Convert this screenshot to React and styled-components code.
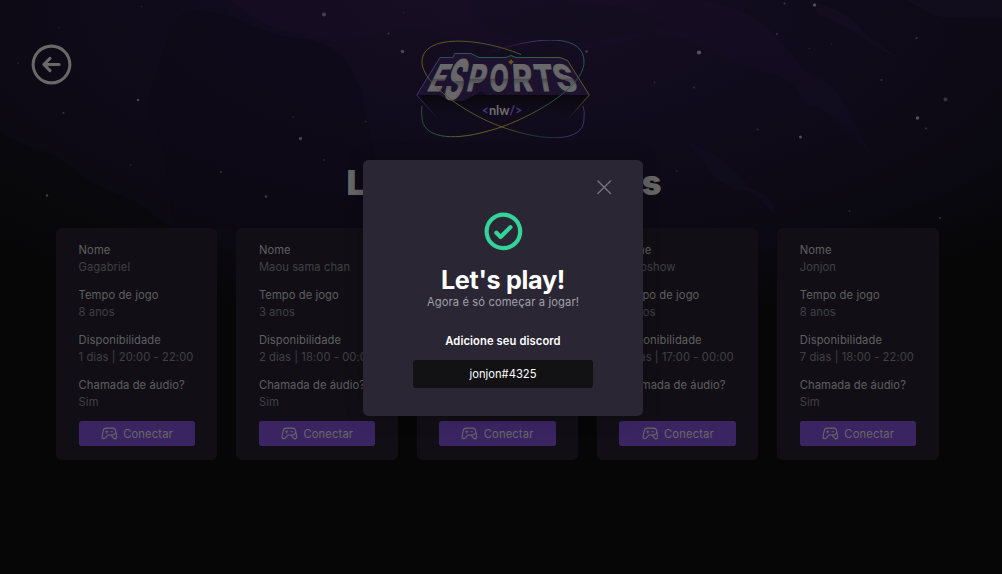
import React from "react";
import styled, { createGlobalStyle } from "styled-components";
import { PiArrowCircleLeft, PiCheckCircleBold, PiGameController, PiX } from "react-icons/pi";

const GlobalStyle = createGlobalStyle`
  *, *::before, *::after { box-sizing: border-box; margin: 0; padding: 0; }
  html, body { background: #121214; overflow: hidden; }
  body, button { font-family: Inter, "Liberation Sans", sans-serif; }
  svg { display: block; }
`;

const Page = styled.div`
  position: relative;
  height: 574px;
  overflow: hidden;
  background: #060607;
  isolation: isolate;
`;
const Backdrop = styled.svg`
  position: absolute;
  inset: 0;
  z-index: -1;
`;
const Header = styled.header`
  display: grid;
  grid-template-columns: 300px 1fr 300px;
  padding: 40px 0 0 27px;
  margin-right: 23px;
`;
const BackButton = styled.button`
  width: 49px;
  height: 49px;
  border: 0;
  background: none;
  color: #6a6968;
  font-size: 49px;
`;
const Logo = styled.svg`
  justify-self: center;
`;
const Heading = styled.h1`
  margin-top: 19.6px;
  height: 50px;
  padding-left: 6px;
  text-align: center;
  font-size: 33.6px;
  line-height: 50px;
  font-weight: 900;
  letter-spacing: -0.1px;
  color: #666;
  white-space: nowrap;
`;
const Cards = styled.main`
  display: flex;
  gap: 19px;
  padding: 20px 0 0 56.2px;
`;
const Card = styled.article`
  flex: none;
  display: flex;
  flex-direction: column;
  justify-content: flex-end;
  width: 161.3px;
  height: 232.4px;
  padding: 14px 22.4px;
  border-radius: 5.6px;
  background: #110f15;
`;
const Field = styled.div`
  margin-bottom: 11.2px;
  font-size: 11.2px;
  line-height: 16.8px;
  letter-spacing: 0.08px;
  white-space: nowrap;
`;
const Label = styled.p`
  color: #5f5f60;
`;
const Value = styled.p`
  color: #404044;
`;
const ConnectButton = styled.button`
  display: flex;
  align-items: center;
  justify-content: center;
  gap: 5.6px;
  width: 100%;
  height: 25.2px;
  margin-top: -0.7px;
  padding-top: 1px;
  border: 0;
  border-radius: 2.8px;
  background: #3a2562;
  color: #6a6769;
  font-size: 11.2px;
  letter-spacing: 0.15px;
  svg { font-size: 16.8px; }
`;
const Modal = styled.section`
  position: absolute;
  left: 363px;
  top: 159.6px;
  width: 280px;
  height: 256.4px;
  padding: 16px 27.2px;
  display: flex;
  flex-direction: column;
  align-items: center;
  border-radius: 5.6px;
  background: #2a2634;
  box-shadow: 0 0 17px rgba(0, 0, 0, 0.25);
`;
const CloseButton = styled.button`
  align-self: flex-end;
  height: 22.4px;
  border: 0;
  background: none;
  color: #76727e;
  font-size: 22.4px;
`;
const SuccessIcon = styled.div`
  margin-top: 11px;
  color: #34d399;
  font-size: 44.8px;
`;
const ModalTitle = styled.h2`
  margin-top: 7.8px;
  font-size: 25.2px;
  line-height: 36px;
  font-weight: 700;
  letter-spacing: -0.3px;
  color: #fff;
`;
const ModalText = styled.p`
  margin-top: -3.8px;
  font-size: 11.2px;
  line-height: 16.8px;
  letter-spacing: 0.1px;
  color: #a1a1aa;
`;
const DiscordLabel = styled.p`
  margin-top: 22.8px;
  font-size: 11.2px;
  line-height: 16.8px;
  font-weight: 600;
  letter-spacing: 0.1px;
  color: #fff;
`;
const DiscordTag = styled.div`
  margin-top: 10px;
  width: 179.2px;
  height: 28px;
  border-radius: 2.8px;
  background: #121214;
  color: #fff;
  text-align: center;
  font-size: 11.2px;
  line-height: 28px;
`;

const players = [
  { name: "Gagabriel", years: "8 anos", when: "1 dias | 20:00 - 22:00", audio: "Sim" },
  { name: "Maou sama chan", years: "3 anos", when: "2 dias | 18:00 - 00:00", audio: "Sim" },
  null,
  { name: "Roboshow", years: "5 anos", when: "5 dias | 17:00 - 00:00", audio: "Sim" },
  { name: "Jonjon", years: "8 anos", when: "7 dias | 18:00 - 22:00", audio: "Sim" },
];

const stars = [
  [324, 14.5, 2, 0.5], [300.5, 138.5, 1.7, 0.55], [138, 100, 1.2, 0.6], [63.5, 113, 1, 0.4],
  [47, 195.5, 1.2, 0.5], [266, 196.5, 1.4, 0.4], [221, 172, 1, 0.4], [130.5, 165, 1, 0.2],
  [18, 63, 1, 0.2], [141.5, 6.5, 0.8, 0.25], [59, 27.5, 0.8, 0.2], [293, 117, 0.9, 0.2],
  [324, 160, 1, 0.25], [402.5, 51.5, 1.7, 0.6], [388.5, 33.5, 1, 0.4], [403.5, 12.5, 0.8, 0.25],
  [586.5, 51.5, 1.3, 0.5], [365.5, 121.5, 1, 0.3], [654.5, 82.5, 0.9, 0.3], [699, 52.5, 2.1, 0.7],
  [814.5, 5, 1.6, 0.7], [784.5, 3.5, 1, 0.45], [777, 34, 1, 0.4], [809.5, 48.5, 0.8, 0.25],
  [831.5, 44, 0.8, 0.2], [916.5, 38, 1.1, 0.4], [881.5, 80, 1.1, 0.4], [945.5, 99.5, 2, 0.4],
  [917.5, 118, 1.8, 0.65], [926, 128.5, 1, 0.4], [800.5, 137, 1.5, 0.65], [757.5, 129.5, 1, 0.35],
  [694, 87.5, 1, 0.3], [676.5, 171, 1, 0.25], [849.5, 211, 1, 0.3], [940, 218, 1.1, 0.4],
];

const letters = [
  { c: "E", x: 10, y: 50.5, w: 15, h: 27, skew: -26 },
  { c: "S", x: 26, y: 58.5, w: 18, h: 40, skew: -17 },
  { c: "P", x: 49.5, y: 50.5, w: 18, h: 27, skew: -13 },
  { c: "O", x: 73, y: 50.5, w: 19, h: 27, skew: -3 },
  { c: "R", x: 97, y: 50.5, w: 20, h: 27, skew: 3 },
  { c: "T", x: 121, y: 50.5, w: 19, h: 27, skew: 10 },
  { c: "S", x: 143.5, y: 50.5, w: 20, h: 27, skew: 21 },
];

function Nebula() {
  return (
    <Backdrop width="1002" height="574" viewBox="0 0 1002 574">
      <defs>
        <radialGradient id="glow" gradientUnits="userSpaceOnUse" cx="0" cy="0" r="1" gradientTransform="translate(500 0) scale(740 330)">
          <stop offset="0" stopColor="#150e22" />
          <stop offset=".45" stopColor="#100b1b" />
          <stop offset=".8" stopColor="#0b0912" />
          <stop offset="1" stopColor="#060607" />
        </radialGradient>
        <linearGradient id="plume" x1="0" y1="0" x2="0" y2="1">
          <stop offset="0" stopColor="#190d27" />
          <stop offset="1" stopColor="#110c20" />
        </linearGradient>
      </defs>
      <rect width="1002" height="574" fill="#060606" />
      <rect width="1002" height="330" fill="url(#glow)" />
      <path d="M168 35C174 14 188 9 206 12C242 12 258 38 302 38C334 42 350 60 360 90L390 228H175C166 200 169 158 157 133C145 113 144 98 157 75Z" fill="#0c0a13" opacity=".35" />
      <path d="M230 0H470C472 22 490 34 530 42C590 60 640 38 668 24C640 8 610 0 500 0H700C750 8 778 32 796 62C812 82 832 78 842 100L870 152C836 122 828 108 812 106C794 102 806 78 764 72C725 64 704 36 650 32C570 44 500 60 450 38C420 20 390 30 334 42C300 30 270 35 230 0Z" fill="url(#plume)" opacity=".5" />
      <path d="M808 0C830 6 850 14 864 32L898 58C870 48 846 22 820 16Z M906 0H1002V18H950C925 16 920 6 906 0Z" fill="#161022" opacity=".5" />
      <path d="M684 140C714 150 736 170 750 188C768 194 776 202 774 214L790 228C768 214 762 192 740 190C710 184 704 158 684 140Z" fill="#110e1f" opacity=".6" />
      <path d="M0 131C22 150 45 146 70 166C96 192 122 190 150 212L170 228H0Z" fill="#070708" opacity=".5" />
      {stars.map(([x, y, r, o], i) => (
        <circle key={i} cx={x} cy={y} r={r} fill="#77707e" opacity={o} />
      ))}
    </Backdrop>
  );
}

function EsportsLogo() {
  return (
    <Logo width="174" height="98" viewBox="0 0 174 98" fill="none">
      <defs>
        <linearGradient id="orbitA" gradientUnits="userSpaceOnUse" x1="5" y1="15" x2="168" y2="90">
          <stop offset="0" stopColor="#62591f" />
          <stop offset=".33" stopColor="#4d5628" />
          <stop offset=".55" stopColor="#5c5427" />
          <stop offset=".8" stopColor="#173634" />
          <stop offset="1" stopColor="#463074" />
        </linearGradient>
        <linearGradient id="orbitB" gradientUnits="userSpaceOnUse" x1="168" y1="10" x2="5" y2="90">
          <stop offset="0" stopColor="#28505a" />
          <stop offset=".3" stopColor="#28543d" />
          <stop offset=".5" stopColor="#62591f" />
          <stop offset=".8" stopColor="#5a6428" />
          <stop offset="1" stopColor="#1b4e43" />
        </linearGradient>
        <linearGradient id="orbitC" gradientUnits="userSpaceOnUse" x1="68" y1="0" x2="168" y2="0">
          <stop offset="0" stopColor="#33235b" stopOpacity="0" />
          <stop offset=".5" stopColor="#402c70" />
          <stop offset="1" stopColor="#28586a" />
        </linearGradient>
        <linearGradient id="frame" gradientUnits="userSpaceOnUse" x1="0" y1="60" x2="174" y2="60">
          <stop offset="0" stopColor="#432b76" />
          <stop offset=".22" stopColor="#2a5362" />
          <stop offset=".55" stopColor="#21614c" />
          <stop offset="1" stopColor="#665b20" />
        </linearGradient>
        <linearGradient id="base" x1="0" y1="0" x2="0" y2="1">
          <stop offset="0" stopColor="#09070d" />
          <stop offset="1" stopColor="#0f0b19" stopOpacity="0" />
        </linearGradient>
        <linearGradient id="edge" x1="0" y1="0" x2="0" y2="1">
          <stop offset="0" stopColor="#432b76" />
          <stop offset="1" stopColor="#432b76" stopOpacity="0" />
        </linearGradient>
        <linearGradient id="edgeRight" x1="0" y1="0" x2="0" y2="1">
          <stop offset="0" stopColor="#665b20" />
          <stop offset="1" stopColor="#665b20" stopOpacity="0" />
        </linearGradient>
        <linearGradient id="metal" gradientUnits="userSpaceOnUse" x1="0" y1="-26" x2="0" y2="0">
          <stop offset="0" stopColor="#6a696b" />
          <stop offset=".55" stopColor="#666567" />
          <stop offset=".57" stopColor="#4c4a4f" />
          <stop offset=".8" stopColor="#676668" />
        </linearGradient>
      </defs>
      <path d="M0.5 55H173.5L150 80H24Z" fill="url(#base)" />
      <path d="M.7 55L24 17.5H37L38.5 13.5H55L63 17.5H90L95 15.5L100 17.5H144L151.5 20.5L173.3 55H70L66 51L48 61H35L22 55Z" fill="#1d132f" />
      <path d="M.7 55L24 17.5H37L38.5 13.5H55L63 17.5H90L95 15.5L100 17.5H144L151.5 20.5L173.3 55" stroke="url(#frame)" strokeWidth="1" />
      <path d="M.7 55L23 80" stroke="url(#edge)" />
      <path d="M173.3 55L151 80" stroke="url(#edgeRight)" />
      {letters.map((l, i) => (
        <text
          key={i}
          transform={`translate(${l.x} ${l.y}) skewX(${l.skew}) scale(${l.w / 26} ${l.h / 26})`}
          fontFamily="Inter, sans-serif"
          fontWeight="700"
          fontSize="35"
          textLength="26"
          lengthAdjust="spacingAndGlyphs"
          fill="url(#metal)"
          stroke="url(#metal)"
          strokeWidth="1"
        >
          {l.c}
        </text>
      ))}
      <path d="M105 14.5C62 -3 6 -6 6 22C6 44 52 75 86 87C128 102 168 103 168 79Q169 71 167 66" stroke="url(#orbitA)" strokeWidth="1" />
      <path d="M168 22C168 50 105 83 72 91C34 102 6 97 6 77Q5 70 6 66" stroke="url(#orbitB)" strokeWidth="1" />
      <path d="M68 14.5C112 -2 168 -10 168 22" stroke="url(#orbitC)" strokeWidth="1" />
      <path d="M95 19L96.2 20.8L98 22L96.2 23.2L95 25L93.8 23.2L92 22L93.8 20.8Z" fill="#66541c" />
      <text x="65.5" y="75" fontFamily="Lato, sans-serif" fontSize="13" fontWeight="700" fill="#6e6c70" textLength="41" lengthAdjust="spacingAndGlyphs">
        <tspan fill="#4b3580">&lt;</tspan>nlw<tspan fill="#4b3580">/&gt;</tspan>
      </text>
    </Logo>
  );
}

function PlayerCard({ player }) {
  return (
    <Card>
      {player && (
        <>
          <Field><Label>Nome</Label><Value>{player.name}</Value></Field>
          <Field><Label>Tempo de jogo</Label><Value>{player.years}</Value></Field>
          <Field><Label>Disponibilidade</Label><Value>{player.when}</Value></Field>
          <Field><Label>Chamada de áudio?</Label><Value>{player.audio}</Value></Field>
        </>
      )}
      <ConnectButton><PiGameController />Conectar</ConnectButton>
    </Card>
  );
}

export default function App() {
  return (
    <Page>
      <GlobalStyle />
      <Nebula />
      <Header>
        <BackButton aria-label="Voltar"><PiArrowCircleLeft /></BackButton>
        <EsportsLogo />
      </Header>
      <Heading>Lista de Jogadores</Heading>
      <Cards>
        {players.map((p, i) => <PlayerCard key={i} player={p} />)}
      </Cards>
      <Modal>
        <CloseButton aria-label="Fechar"><PiX /></CloseButton>
        <SuccessIcon><PiCheckCircleBold /></SuccessIcon>
        <ModalTitle>Let's play!</ModalTitle>
        <ModalText>Agora é só começar a jogar!</ModalText>
        <DiscordLabel>Adicione seu discord</DiscordLabel>
        <DiscordTag>jonjon#4325</DiscordTag>
      </Modal>
    </Page>
  );
}
